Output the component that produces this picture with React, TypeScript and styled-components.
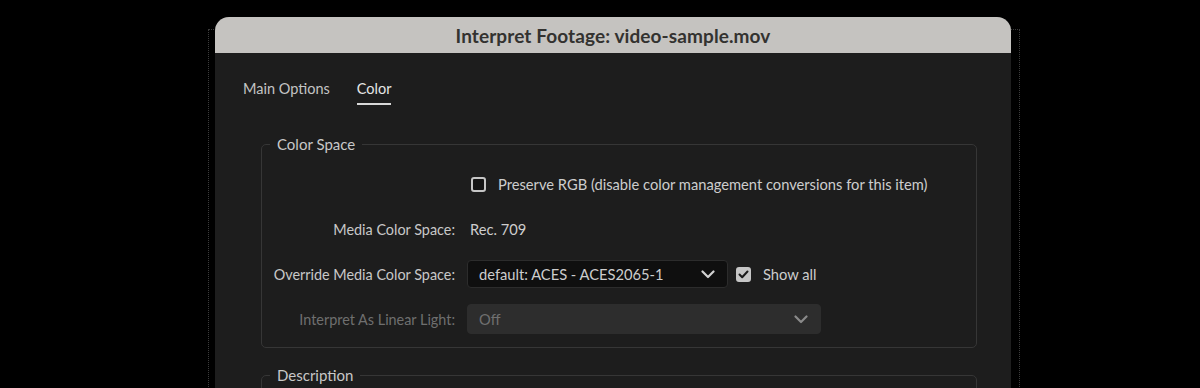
import React from 'react';
import styled, { createGlobalStyle } from 'styled-components';

const GlobalStyle = createGlobalStyle`
  html, body {
    margin: 0;
    padding: 0;
    background: #000;
  }
  body {
    font-family: Lato, "Open Sans", "Noto Sans", sans-serif;
    -webkit-font-smoothing: antialiased;
  }
`;

const Page = styled.div`
  height: 388px;
  overflow: hidden;
  background: #000;
  padding-top: 29px;
  box-sizing: border-box;
`;

const Frame = styled.div`
  margin-left: 208px;
  width: 812px;
  height: 420px;
  border: 1px dotted #3c3c3c;
  border-bottom: none;
  box-sizing: border-box;
`;

const Dialog = styled.div`
  margin: -13px 8px 0 6px;
  background: #1d1d1d;
  border-radius: 14px 14px 0 0;
  overflow: hidden;
  height: 420px;
`;

const TitleBar = styled.div`
  height: 36px;
  background: #c5c3c0;
  display: flex;
  align-items: center;
  justify-content: center;
  font-weight: 700;
  font-size: 19px;
  color: #333230;
  letter-spacing: 0.1px;
`;

const Tabs = styled.div`
  display: flex;
  gap: 27px;
  padding: 26px 0 0 28px;
  height: 52px;
  box-sizing: border-box;
`;

const Tab = styled.div<{ $active?: boolean }>`
  font-size: 14.5px;
  line-height: 20px;
  color: ${p => (p.$active ? '#e6e6e6' : '#c4c4c4')};
  padding-bottom: 4px;
  border-bottom: 2px solid ${p => (p.$active ? '#d8d8d8' : 'transparent')};
  height: 20px;
`;

const Group = styled.fieldset<{ $gap?: number }>`
  margin: ${p => p.$gap ?? 0}px 34px 0 46px;
  border: 1px solid #363636;
  border-radius: 5px;
  padding: 15px 0 13px 0;
  min-width: 0;
`;

const Legend = styled.legend`
  margin-left: 8px;
  padding: 0 7px;
  font-size: 15px;
  line-height: 20px;
  color: #c8c8c8;
`;

const Rows = styled.div`
  display: grid;
  grid-template-columns: 205px 1fr;
  grid-auto-rows: 30px;
  row-gap: 15px;
  align-items: center;
`;

const Label = styled.div<{ $disabled?: boolean }>`
  text-align: right;
  padding-right: 12px;
  font-size: 14.4px;
  color: ${p => (p.$disabled ? '#6f6f6f' : '#c8c8c8')};
  white-space: nowrap;
`;

const Control = styled.div`
  display: flex;
  align-items: center;
  font-size: 14.7px;
  color: #cdcdcd;
  white-space: nowrap;
`;

const Value = styled.span`
  padding-left: 3px;
`;

const Spacer = styled.span`
  width: 4px;
  flex: none;
`;

const Box = styled.span<{ $checked?: boolean }>`
  width: 15px;
  height: 15px;
  box-sizing: border-box;
  border-radius: 3px;
  border: 2px solid #c6c6c6;
  background: ${p => (p.$checked ? '#c6c6c6' : '#141414')};
  display: inline-flex;
  align-items: center;
  justify-content: center;
  flex: none;
`;

const CheckLabel = styled.span`
  margin-left: 12px;
  color: #cdcdcd;
`;

const Select = styled.div<{ $width: number; $disabled?: boolean }>`
  width: ${p => p.$width}px;
  height: ${p => (p.$disabled ? 30 : 28)}px;
  box-sizing: border-box;
  display: flex;
  align-items: center;
  justify-content: space-between;
  padding: 0 12px 0 11px;
  border-radius: 4px;
  background: ${p => (p.$disabled ? '#2d2d2d' : '#0f0f0f')};
  border: 1px solid ${p => (p.$disabled ? '#2d2d2d' : '#2c2c2c')};
  color: ${p => (p.$disabled ? '#707070' : '#cdcdcd')};
  margin-right: ${p => (p.$disabled ? 0 : 8)}px;
`;

const Chevron = ({ color }: { color: string }) => (
  <svg width="14" height="9" viewBox="0 0 14 9">
    <polyline points="1.5,1.5 7,7 12.5,1.5" fill="none" stroke={color} strokeWidth="2.2" strokeLinecap="round" strokeLinejoin="round" />
  </svg>
);

const Check = () => (
  <svg width="11" height="9" viewBox="0 0 11 9">
    <polyline points="1.5,4.5 4.2,7.2 9.5,1.5" fill="none" stroke="#1a1a1a" strokeWidth="2" strokeLinecap="round" strokeLinejoin="round" />
  </svg>
);

export default function App() {
  return (
    <Page>
      <GlobalStyle />
      <Frame>
        <Dialog>
          <TitleBar>Interpret Footage: video-sample.mov</TitleBar>
          <Tabs>
            <Tab>Main Options</Tab>
            <Tab $active>Color</Tab>
          </Tabs>

          <Group $gap={29}>
            <Legend>Color Space</Legend>
            <Rows>
              <div />
              <Control>
                <Spacer />
                <Box />
                <CheckLabel>Preserve RGB (disable color management conversions for this item)</CheckLabel>
              </Control>

              <Label>Media Color Space:</Label>
              <Control>
                <Value>Rec. 709</Value>
              </Control>

              <Label>Override Media Color Space:</Label>
              <Control>
                <Select $width={261}>
                  <span>default: ACES - ACES2065-1</span>
                  <Chevron color="#d2d2d2" />
                </Select>
                <Box $checked>
                  <Check />
                </Box>
                <CheckLabel>Show all</CheckLabel>
              </Control>

              <Label $disabled>Interpret As Linear Light:</Label>
              <Control>
                <Select $width={354} $disabled>
                  <span>Off</span>
                  <Chevron color="#8a8a8a" />
                </Select>
              </Control>
            </Rows>
          </Group>

          <Group $gap={17}>
            <Legend>Description</Legend>
          </Group>
        </Dialog>
      </Frame>
    </Page>
  );
}
